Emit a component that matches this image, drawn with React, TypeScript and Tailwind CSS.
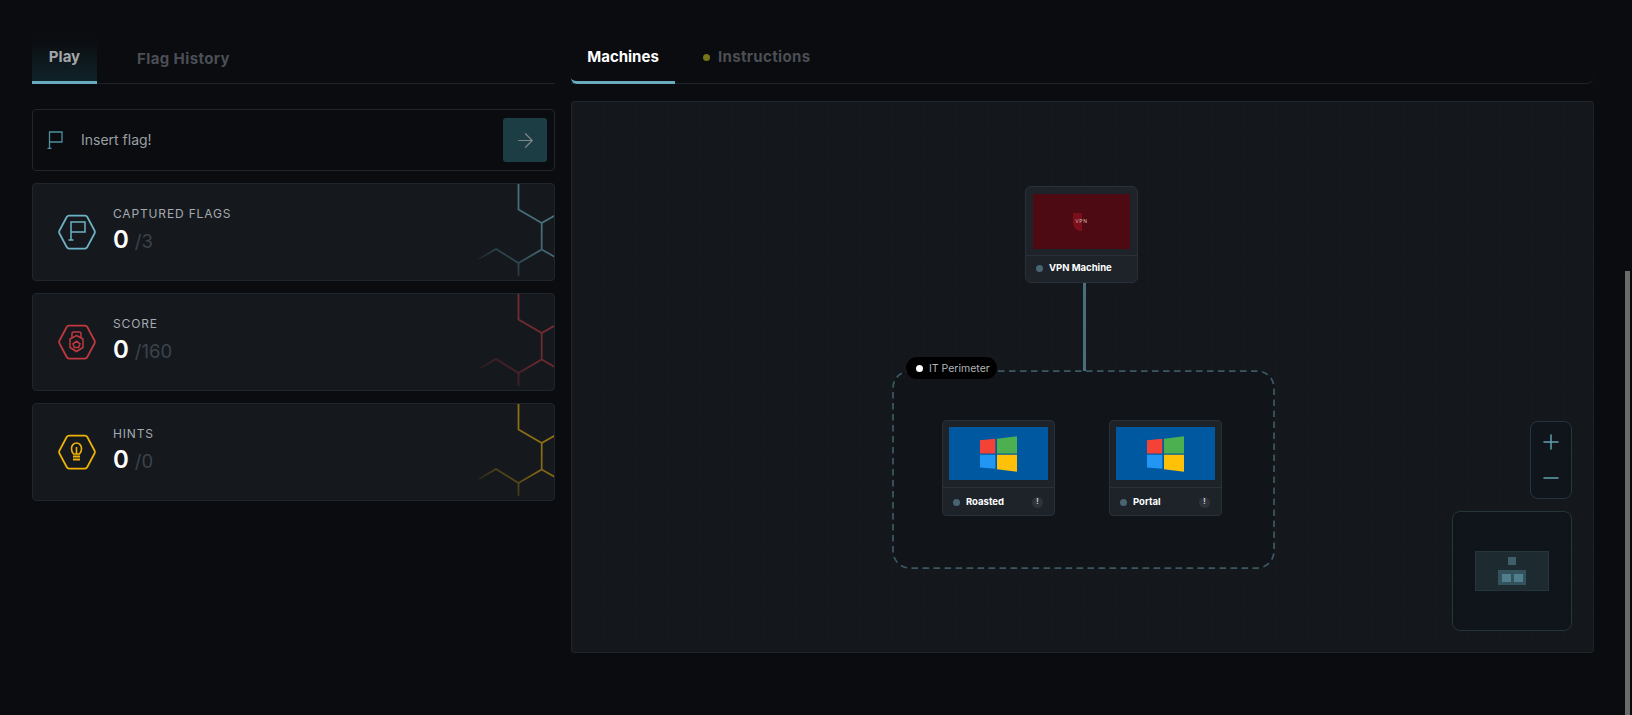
import React from 'react';
import { ArrowRight, Minus, Plus } from 'lucide-react';

type StatProps = {
  label: string;
  total: string;
  color: string;
  gradientId: string;
  icon: React.ReactNode;
};

const HexBackground = ({ color, id }: { color: string; id: string }) => (
  <svg className="absolute right-[-2px] top-0 h-[96px] w-[80px]" viewBox="0 0 80 96" fill="none">
    <defs>
      <linearGradient id={id} gradientUnits="userSpaceOnUse" x1="70" y1="10" x2="5" y2="85">
        <stop offset="0" stopColor={color} stopOpacity="0.62" />
        <stop offset="0.5" stopColor={color} stopOpacity="0.5" />
        <stop offset="1" stopColor={color} stopOpacity="0.02" />
      </linearGradient>
    </defs>
    <path
      d="M42.5 0V25.5L65.7 39L80 31M65.7 39V65.5M80 73.5L65.7 65.5L42.5 79L20 65L3 75M42.5 79V92"
      stroke={`url(#${id})`}
      strokeWidth="1.75"
    />
  </svg>
);

const HexIcon = ({ color, children }: { color: string; children: React.ReactNode }) => (
  <svg width="38" height="36" viewBox="0 0 38 36" fill="none" className="shrink-0">
    <path
      d="M11 1.5H27Q28.5 1.5 29.3 3L36.5 16.5Q37.3 18 36.5 19.5L29.3 33Q28.5 34.5 27 34.5H11Q9.5 34.5 8.7 33L1.5 19.5Q0.7 18 1.5 16.5L8.7 3Q9.5 1.5 11 1.5Z"
      stroke={color}
      strokeWidth="1.75"
    />
    {children}
  </svg>
);

const StatCard = ({ label, total, color, gradientId, icon }: StatProps) => (
  <div className="relative flex h-[98px] items-center gap-[17px] overflow-hidden rounded-[4px] border border-[#20262d] bg-[#15191e] pl-[25px]">
    <HexIcon color={color}>{icon}</HexIcon>
    <div className="flex flex-col pb-[5px]">
      <span className="text-[12px] leading-[16px] tracking-[0.07em] text-[#a4a9b0]">{label}</span>
      <div className="mt-[4px] flex items-baseline gap-[6px]">
        <span className="text-[24px] font-semibold leading-[28px] text-white">0</span>
        <span className="text-[18.5px] leading-[24px] text-[#3c434c]">{total}</span>
      </div>
    </div>
    <HexBackground color={color} id={gradientId} />
  </div>
);

const WindowsLogo = () => (
  <svg width="37" height="36" viewBox="0 0 111 107">
    <path d="M0 12L46 8V52H0Z" fill="#f44336" />
    <path d="M51 8L111 0V52H51Z" fill="#4caf50" />
    <path d="M0 56H46V98L0 94Z" fill="#2196f3" />
    <path d="M51 56H111V107L51 99Z" fill="#ffc107" />
  </svg>
);

const Machine = ({ name, className }: { name: string; className: string }) => (
  <div className={`absolute flex h-[96px] w-[113px] flex-col rounded-[4px] border border-[#2a3038] bg-[#1e232a] ${className}`}>
    <div className="mx-[6px] mt-[6px] flex h-[53px] items-center justify-center bg-[#0058a0]">
      <WindowsLogo />
    </div>
    <div className="mt-[7px] flex flex-1 items-center border-t border-[#2a3038] pl-[10px] pr-[11px] pt-[1px]">
      <span className="h-[7px] w-[7px] rounded-full bg-[#4a6572]" />
      <span className="ml-[6px] flex-1 text-[9.5px] font-bold text-white">{name}</span>
      <span className="flex h-[11px] w-[11px] items-center justify-center rounded-full bg-[#2d333b] text-[7px] font-bold text-[#d5d8dc]">!</span>
    </div>
  </div>
);

export default function App() {
  return (
    <div
      className="relative flex h-[715px] gap-[16px] overflow-hidden bg-[#0a0c0f] pl-[32px] pr-[38px] pt-[37px]"
      style={{ fontFamily: 'Inter, "Liberation Sans", sans-serif' }}
    >
      {/* left column */}
      <div className="flex w-[523px] flex-col">
        <div className="flex h-[47px] border-b border-[#1e2329]">
          <div className="flex h-[47px] w-[65px] justify-center border-b-[3px] border-[#6aaabf] bg-gradient-to-b from-[#0a0c0f] to-[#0f2329] pt-[10px] text-[15px] font-bold leading-[20px] text-[#a3a7ab]">
            Play
          </div>
          <div className="ml-[40px] pt-[12px] text-[15px] font-bold leading-[20px] tracking-[0.4px] text-[#4b4f55]">Flag History</div>
        </div>

        <div className="mt-[25px] flex h-[62px] items-center rounded-[4px] border border-[#20262d] bg-[#0a0c0f] pl-[14px] pr-[7px]">
          <svg width="16" height="18" viewBox="0 0 16 18" fill="none" stroke="#4f8fa0" strokeWidth="1.3">
            <path d="M2.5 17.5V1H15V11H2.5M0.5 17.5H4.5" />
          </svg>
          <span className="ml-[18px] flex-1 pb-[2px] text-[14px] text-[#9a9fa4]">Insert flag!</span>
          <div className="flex h-[44px] w-[44px] items-center justify-center rounded-[3px] bg-[#1d3d44]">
            <ArrowRight size={23} strokeWidth={1.25} className="text-[#7f8789]" />
          </div>
        </div>

        <div className="mt-[12px] flex flex-col gap-[12px]">
          <StatCard
            label="CAPTURED FLAGS"
            total="/3"
            color="#6eb1c4"
            gradientId="hex-flag"
            icon={<path d="M13 26V8H27V18H13M10.5 26H15.5" stroke="#6eb1c4" strokeWidth="1.5" />}
          />
          <StatCard
            label="SCORE"
            total="/160"
            color="#c0393f"
            gradientId="hex-score"
            icon={
              <g stroke="#c0393f" strokeWidth="1.5">
                <path d="M14 14V9.5Q14 8 15.5 8H21.5Q23 8 23 9.5V14" />
                <path d="M18.5 11.5L25 15V23.5L18.5 27.5L12 23.5V15Z" />
                <path d="M18.5 17.2L22 19.8L20.7 23.6H16.3L15 19.8Z" />
              </g>
            }
          />
          <StatCard
            label="HINTS"
            total="/0"
            color="#eeb105"
            gradientId="hex-hints"
            icon={
              <g stroke="#eeb105" strokeWidth="1.6">
                <path d="M15.5 20C14 18.5 13.5 16.5 13.5 14.5C13.5 11.5 15.7 9 18.5 9C21.3 9 23.5 11.5 23.5 14.5C23.5 16.5 23 18.5 21.5 20Z" />
                <path d="M18.5 13V20" />
                <path d="M15 22.5H22M15 25.5H22" strokeWidth="2" />
              </g>
            }
          />
        </div>
      </div>

      {/* right column */}
      <div className="flex w-[1023px] flex-col">
        <div className="flex h-[47px] rounded-br-[8px] border-b border-[#1e2329]">
          <div className="flex h-[47px] w-[104px] justify-center rounded-bl-[6px] border-b-[3px] border-[#6aaabf] pt-[10px] text-[15px] font-bold leading-[20px] text-white">
            Machines
          </div>
          <div className="ml-[28px] flex items-center gap-[8px] self-start pt-[10px]">
            <span className="h-[7px] w-[7px] rounded-full bg-[#777318]" />
            <span className="text-[15px] font-bold leading-[20px] tracking-[0.35px] text-[#4b4f55]">Instructions</span>
          </div>
        </div>

        <div className="relative mt-[17px] h-[552px] rounded-[3px] border border-[#1f242b] bg-[#14181d] bg-[linear-gradient(to_right,#16191f_1px,transparent_1px),linear-gradient(to_bottom,#15191e_1px,transparent_1px)] bg-[size:32px_32px]">
          {/* canvas: coordinates are the places of the diagram's nodes */}
          <div className="absolute left-[453px] top-[84px] flex h-[97px] w-[113px] flex-col rounded-[6px] border border-[#2a3038] bg-[#1e232a]">
            <div className="mx-[7px] mt-[7px] flex h-[55px] items-center justify-center bg-[#4d0a12]">
              <div className="relative flex h-[18px] w-[18px] items-center justify-center">
                <span className="absolute left-0 top-0 h-[18px] w-[9px] rounded-bl-[8px] bg-[#7a0f1a]" />
                <span className="relative text-[5px] tracking-[0.15em] text-[#d9b9bc]">VPN</span>
              </div>
            </div>
            <div className="mt-[6px] flex flex-1 items-center border-t border-[#2a3038] pb-[2px] pl-[10px]">
              <span className="h-[7px] w-[7px] rounded-full bg-[#4a6572]" />
              <span className="ml-[6px] text-[9.5px] font-bold text-white">VPN Machine</span>
            </div>
          </div>

          <div className="absolute left-[511px] top-[181px] h-[89px] w-[3px] bg-[#4a6f7c]" />

          {/* group outline */}
          <svg className="absolute left-[320px] top-[268px]" width="383" height="199" fill="#111419">
            <rect x="1" y="1" width="381" height="197" rx="17" stroke="#3b5862" strokeWidth="1.75" strokeDasharray="6.5 4.5" />
          </svg>

          <div className="absolute left-[334px] top-[255px] flex h-[22px] w-[91px] items-center rounded-full bg-black pl-[10px] text-[10.5px] text-[#b0b4b8]">
            <span className="mr-[6px] h-[7px] w-[7px] rounded-full bg-white" />
            <span className="pt-[1px]">IT Perimeter</span>
          </div>

          <Machine name="Roasted" className="left-[370px] top-[318px]" />
          <Machine name="Portal" className="left-[537px] top-[318px]" />

          <div className="absolute left-[958px] top-[319px] flex h-[78px] w-[42px] flex-col items-center justify-center gap-[12px] rounded-[8px] border border-[#26343c] bg-[#0f151b] text-[#5f9fb0]">
            <Plus size={24} strokeWidth={1.5} />
            <Minus size={24} strokeWidth={1.5} />
          </div>

          <div className="absolute left-[880px] top-[409px] flex h-[120px] w-[120px] items-center justify-center rounded-[8px] border border-[#26343c] bg-[#0f151b]">
            <div className="flex h-[40px] w-[74px] flex-col items-center border border-[#25353b] bg-[#1d2a30] pt-[5px]">
              <span className="h-[8px] w-[8px] bg-[#3f5f6a]" />
              <div className="mt-[5px] flex h-[15px] w-[28px] items-center justify-center gap-[3px] bg-[#34525c]">
                <span className="h-[8px] w-[9px] bg-[#4f7f8d]" />
                <span className="h-[8px] w-[9px] bg-[#4f7f8d]" />
              </div>
            </div>
          </div>
        </div>
      </div>

      {/* page scrollbar */}
      <div className="absolute right-[2px] top-[271px] h-[444px] w-[5px] bg-[#6b6b6b]" />
    </div>
  );
}
